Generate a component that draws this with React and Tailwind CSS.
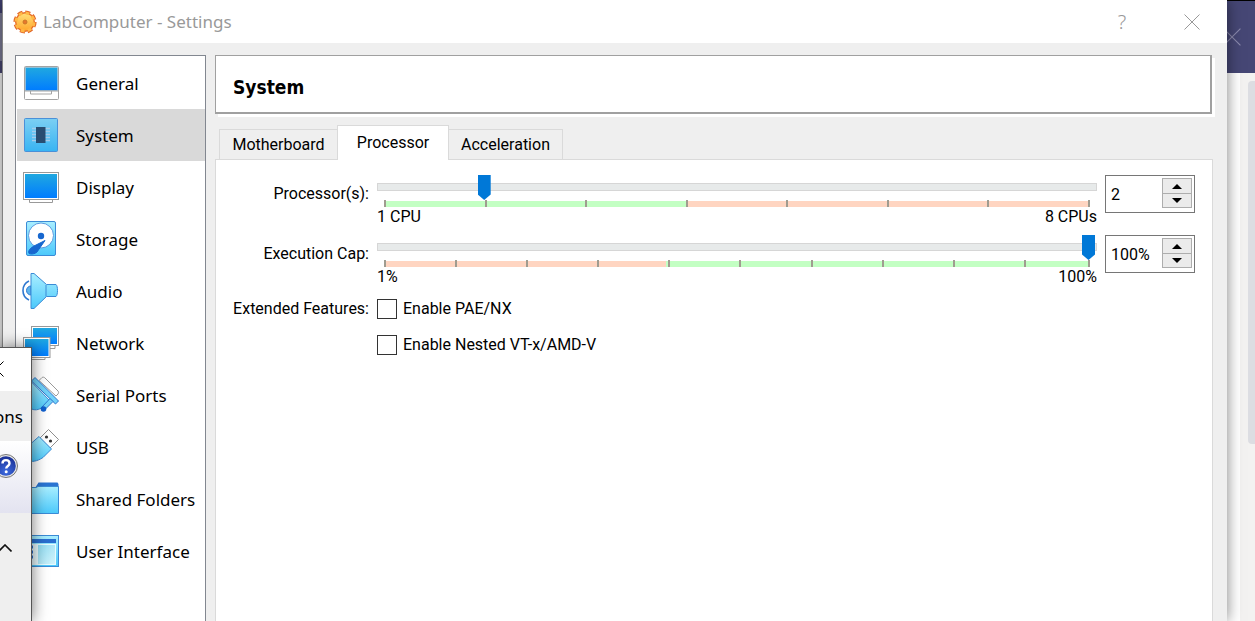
import React, { useState } from "react";
import clsx from "clsx";

function Gradients() {
  return (
    <svg width="0" height="0" className="absolute" aria-hidden="true">
      <defs>
        <linearGradient id="screen" x1="0" y1="0" x2="0" y2="1">
          <stop offset="0" stopColor="#20a8e0" />
          <stop offset="1" stopColor="#007cff" />
        </linearGradient>
        <linearGradient id="sky" x1="0" y1="0" x2="0" y2="1">
          <stop offset="0" stopColor="#a9eeff" />
          <stop offset="1" stopColor="#4cc9fb" />
        </linearGradient>
        <linearGradient id="chip" x1="0" y1="0" x2="0" y2="1">
          <stop offset="0" stopColor="#7ccff3" />
          <stop offset="1" stopColor="#38b4f3" />
        </linearGradient>
        <linearGradient id="pane" x1="0" y1="0" x2="1" y2="1">
          <stop offset="0" stopColor="#8fdcf2" />
          <stop offset="1" stopColor="#d2f3fb" />
        </linearGradient>
        <linearGradient id="gear" x1="0" y1="0" x2="0" y2="1">
          <stop offset="0" stopColor="#ffe07a" />
          <stop offset="1" stopColor="#ffa62b" />
        </linearGradient>
        <radialGradient id="help" cx="0.5" cy="0.8" r="0.8">
          <stop offset="0" stopColor="#3d6be0" />
          <stop offset="1" stopColor="#1a2f94" />
        </radialGradient>
      </defs>
    </svg>
  );
}

const icons = {
  General: (
    <>
      <rect x="1.5" y="1.5" width="34" height="33" rx="1" fill="#fff" stroke="#a3a3a3" />
      <rect x="2.5" y="2.5" width="32" height="23" fill="url(#screen)" stroke="#8fb6cc" strokeWidth="0.6" />
      <path d="M1.5 26H35M7.5 26v3h21v-3" fill="none" stroke="#a3a3a3" />
    </>
  ),
  System: (
    <>
      <rect x="1.5" y="1.5" width="33" height="33" rx="1" fill="url(#chip)" stroke="#4a90d8" />
      <path d="M9 11.5h18M9 14.5h18M9 17.5h18M9 20.5h18M9 23.5h18" stroke="#a5ccea" strokeWidth="1.4" />
      <rect x="13" y="10" width="9.5" height="16" fill="#284d72" />
    </>
  ),
  Display: (
    <>
      <path d="M6.5 30h23v3.5h-23z" fill="#fff" stroke="#999" />
      <rect x="0.5" y="3.5" width="35" height="27" fill="#fff" stroke="#999" />
      <rect x="2" y="5" width="32" height="24" fill="url(#screen)" />
    </>
  ),
  Storage: (
    <>
      <rect x="3.5" y="0.5" width="29" height="34" rx="1.5" fill="url(#sky)" stroke="#3b8bd6" />
      <circle cx="18" cy="14.5" r="12.5" fill="#fff" stroke="#5b9be0" />
      <circle cx="18" cy="15" r="3.2" fill="#1767cf" />
      <path d="M22 19.5 11 25c-5 3-6 5.5-5 7.5 2 1 6 .5 8-1.5z" fill="#1767cf" stroke="#1767cf" />
    </>
  ),
  Audio: (
    <>
      <path d="M6 8a10.5 10.5 0 0 0 0 19" fill="none" stroke="#2f78d0" strokeWidth="1.6" />
      <path d="M8 13a4.5 4.5 0 0 0 0 9z" fill="#5fb4ec" stroke="#2f78d0" />
      <path d="M8 .5h3L23.500 11.5H33c1 1 1.500 3 1.500 6s-.5 5-1.500 6h-9.500L11 35.500H8z" fill="url(#sky)" stroke="#3b8bd6" strokeLinejoin="round" />
      <path d="M23 12v11.500" stroke="#3b8bd6" />
    </>
  ),
  Network: (
    <>
      <path d="M22 20.500h10v3H22z" fill="#fff" stroke="#999" />
      <rect x="8.5" y="1.5" width="27" height="19" fill="#fff" stroke="#999" />
      <rect x="10" y="3" width="24" height="16" fill="url(#screen)" />
      <path d="M5 32h17v2.500H5z" fill="#fff" stroke="#999" />
      <rect x="0.5" y="12.5" width="26.5" height="20" fill="#fff" stroke="#999" />
      <rect x="2" y="14" width="23.5" height="17" fill="url(#screen)" />
    </>
  ),
  "Serial Ports": (
    <>
      <path d="M16 3.500 19 .500c1-.5 2-.5 3 .5l13 13c.8 1 .8 2 0 3l-2 2z" fill="#fff" stroke="#999" strokeLinejoin="round" />
      <path d="M8.500 5 27 24l-7 6c-4 3-9 4-13 1-4-4-5-9-4-15z" fill="url(#sky)" stroke="#3b8bd6" />
      <path d="M8.500 4 12 .500 35.500 24l-3 3z" fill="#72d2f8" stroke="#2f78d0" strokeLinejoin="round" />
      <path d="M19 30 27 21.500l3 3-8 8z" fill="#72d2f8" stroke="#2f78d0" />
      <circle cx="20.5" cy="32" r="2.8" fill="#1060cf" />
    </>
  ),
  USB: (
    <>
      <path d="M17 9 25.500.500 35.500 10.500 27 19z" fill="#fff" stroke="#8e8e8e" strokeLinejoin="round" />
      <circle cx="23.5" cy="8" r="1.600" fill="#333" />
      <circle cx="27.500" cy="12" r="1.600" fill="#333" />
      <path d="M16 7.500 28.500 20 20 28.500C14 32.500 9 33 4 32 3 24 5 17 8 14.500z" fill="url(#sky)" stroke="#3b8bd6" strokeLinejoin="round" />
    </>
  ),
  "Shared Folders": (
    <>
      <path d="M12 7 15.500 1.500h19l1 1.500v5H12z" fill="#2a74d2" />
      <path d="M.500 6.500H13l2-1h20.500v27H.500z" fill="url(#sky)" stroke="#3b8bd6" />
    </>
  ),
  "User Interface": (
    <>
      <rect x="0.5" y="2.5" width="35" height="31" fill="url(#sky)" stroke="#3b8bd6" />
      <rect x="2" y="6" width="31" height="4" fill="#2a6fd0" />
      <rect x="2" y="11" width="31" height="21" fill="#e8fafe" />
      <path d="M3 14h7M3 19h7M3 24h7" stroke="#2a6fd0" strokeWidth="3" />
      <rect x="15" y="12" width="17" height="19" fill="url(#pane)" />
    </>
  ),
};

const pages = Object.keys(icons);

const sliders = [
  {
    id: "processors",
    label: "Processor(s):",
    min: 1,
    max: 8,
    initial: 2,
    suffix: "",
    steps: [1, 1, 1, 1, 1, 1, 1],
    minText: "1 CPU",
    maxText: "8 CPUs",
    split: 43,
    colors: ["bg-[#c3ffc3]", "bg-[#ffd5c1]"],
  },
  {
    id: "execution-cap",
    label: "Execution Cap:",
    min: 1,
    max: 100,
    initial: 100,
    suffix: "%",
    steps: [10, 10, 10, 10, 10, 10, 10, 10, 10, 9],
    minText: "1%",
    maxText: "100%",
    split: 40,
    colors: ["bg-[#ffd5c1]", "bg-[#c3ffc3]"],
  },
];

function Cross({ className }) {
  return (
    <svg viewBox="0 0 16 16" className={clsx("h-4 w-4 shrink-0", className)} fill="none" stroke="currentColor">
      <path d="M.5.5l15 15M15.500.5l-15 15" />
    </svg>
  );
}

function GearIcon() {
  return (
    <svg viewBox="0 0 24 24" className="h-6 w-6">
      <circle cx="12" cy="12" r="9.8" fill="none" stroke="#e0652a" strokeWidth="3.6" strokeDasharray="4.9 2.797" />
      <circle cx="12" cy="12" r="9.3" fill="url(#gear)" stroke="#e8702a" strokeWidth="1.4" />
      <circle cx="12" cy="12" r="9" fill="none" stroke="#ffb845" strokeWidth="3" strokeDasharray="3.7 3.369" strokeDashoffset="-0.4" />
      <circle cx="12" cy="12" r="2" fill="#e8762a" stroke="#c9772a" />
    </svg>
  );
}

function SpinBox({ slider, value, onChange }) {
  const step = (d) => onChange(Math.min(slider.max, Math.max(slider.min, value + d)));
  const button = "flex w-full items-center justify-center border border-[#adadad] bg-[#ebebeb]";
  return (
    <div className="flex h-[38px] border border-[#767676] bg-white">
      <input
        type="text"
        aria-label={slider.label}
        value={value + slider.suffix}
        onChange={(e) => onChange(parseInt(e.target.value, 10) || slider.min)}
        className="w-0 min-w-0 flex-1 pl-[5px] pt-0.5 outline-none"
      />
      <div className="mr-0.5 mt-0.5 w-[30px]">
        <button type="button" aria-label="Increase" onClick={() => step(1)} className={clsx(button, "h-4")}>
          <svg viewBox="0 0 10 5" className="h-[5px] w-2.5"><path d="M5 0l5 5H0z" /></svg>
        </button>
        <button type="button" aria-label="Decrease" onClick={() => step(-1)} className={clsx(button, "h-[14px] border-t-0")}>
          <svg viewBox="0 0 10 5" className="h-[5px] w-2.5"><path d="M0 0h10L5 5z" /></svg>
        </button>
      </div>
    </div>
  );
}

function SliderRow({ slider }) {
  const [value, setValue] = useState(slider.initial);
  return (
    <>
      <label htmlFor={slider.id} className="h-[38px] text-right leading-[38px]">{slider.label}</label>
      <div>
        <div className="grid">
          <div className="col-start-1 row-start-1 mt-2 h-2 border border-[#d6d6d6] bg-[#e7eaea]" />
          <input
            id={slider.id}
            type="range"
            min={slider.min}
            max={slider.max}
            value={value}
            onChange={(e) => setValue(Number(e.target.value))}
            className="col-start-1 row-start-1 mr-0.5 h-[25px] appearance-none bg-transparent [&::-webkit-slider-thumb]:h-[25px] [&::-webkit-slider-thumb]:w-[13px] [&::-webkit-slider-thumb]:appearance-none [&::-webkit-slider-thumb]:bg-[#0078d7] [&::-webkit-slider-thumb]:[clip-path:polygon(0_0,100%_0,100%_78%,50%_100%,0_78%)]"
          />
        </div>
        <div className="mx-[7px] grid h-[7px]">
          <div className="col-start-1 row-start-1 mt-px flex">
            <div className={slider.colors[0]} style={{ width: `${slider.split}%` }} />
            <div className={clsx("flex-1", slider.colors[1])} />
          </div>
          <div className="col-start-1 row-start-1 flex">
            {slider.steps.map((n, i) => (
              <div key={i} className="basis-0 border-l-2 border-[#a09c90]" style={{ flexGrow: n }} />
            ))}
            <div className="w-0.5 bg-[#a09c90]" />
          </div>
        </div>
        <div className="flex justify-between leading-5">
          <span>{slider.minText}</span>
          <span>{slider.maxText}</span>
        </div>
      </div>
      <SpinBox slider={slider} value={value} onChange={setValue} />
    </>
  );
}

function Sidebar() {
  const [page, setPage] = useState("System");
  return (
    <nav className="w-[191px] shrink-0 border border-b-0 border-[#828790] bg-white pl-px pt-px font-['Noto_Sans',sans-serif] text-[17px]">
      {pages.map((name) => (
        <button
          key={name}
          type="button"
          onClick={() => setPage(name)}
          className={clsx("flex h-[52px] w-full items-center gap-[17px] whitespace-nowrap pl-1.5 text-left", page === name && "bg-[#d9d9d9]")}
        >
          <svg viewBox="0 0 36 36" className="h-9 w-9 shrink-0 overflow-visible">{icons[name]}</svg>
          <span className="pt-0.5">{name}</span>
        </button>
      ))}
    </nav>
  );
}

function Tabs() {
  const tab = "border border-b-0 border-[#dadada]";
  return (
    <div role="tablist" className="flex items-end pl-1">
      <button type="button" role="tab" className={clsx(tab, "h-[30px] w-[118px] border-r-0")}>Motherboard</button>
      <button type="button" role="tab" aria-selected="true" className={clsx(tab, "relative -mb-px h-[35px] w-28 bg-white")}>Processor</button>
      <button type="button" role="tab" className={clsx(tab, "h-[30px] w-[114px] border-l-0")}>Acceleration</button>
    </div>
  );
}

function SettingsDialog() {
  return (
    <main className="relative flex min-w-0 flex-1 flex-col bg-[#efefef] shadow-[0_0_14px_rgba(0,0,0,0.5)]">
      <header className="flex h-[43px] items-center bg-white pl-2.5 text-[#999]">
        <GearIcon />
        <h1 className="ml-1.5 flex-1 font-['Noto_Sans',sans-serif] text-[17px]">LabComputer - Settings</h1>
        <button type="button" aria-label="Help" className="h-full w-[70px] font-['Noto_Sans',sans-serif] text-xl font-light">?</button>
        <button type="button" aria-label="Close" className="flex h-full w-[70px] items-center justify-center"><Cross /></button>
      </header>
      <div className="flex flex-1 gap-[9px] pl-3 pr-3.5 pt-3">
        <Sidebar />
        <section className="flex min-w-0 flex-1 flex-col font-[Roboto,sans-serif] text-base">
          <div className="mr-px flex h-[59px] items-center border border-b-2 border-r-2 border-[#a0a0a0] bg-white pl-[17px] pt-1.5 shadow-[3px_3px_0_#fff]">
            <h2 className="font-['DejaVu_Sans_Condensed','DejaVu_Sans',sans-serif] text-[19px] font-bold">System</h2>
          </div>
          <div className="mt-[11px] flex flex-1 flex-col">
            <Tabs />
            <form className="grid flex-1 grid-cols-[137px_1fr_90px] content-start gap-x-2 gap-y-2 whitespace-nowrap border border-b-0 border-[#dadada] bg-white pl-4 pr-[17px] pt-[15px]">
              {sliders.map((s) => <SliderRow key={s.id} slider={s} />)}
              <span className="mt-1 text-right leading-5">Extended Features:</span>
              <div className="mt-1 flex flex-col gap-4">
                {["Enable PAE/NX", "Enable Nested VT-x/AMD-V"].map((text) => (
                  <label key={text} className="flex h-5 items-center gap-1.5">
                    <input type="checkbox" className="h-5 w-5 appearance-none border border-[#333] bg-white checked:bg-[#0078d7]" />
                    {text}
                  </label>
                ))}
              </div>
            </form>
          </div>
        </section>
      </div>
    </main>
  );
}

// corner of the window that sits on top of the dialog
function FrontWindow() {
  return (
    <aside className="absolute bottom-0 left-0 top-[347px] flex w-8 flex-col border-r border-t border-[#555] bg-[#efefef] shadow-[0_0_16px_rgba(0,0,0,0.55)]">
      <div className="flex h-[43px] items-center overflow-hidden bg-white pb-0.5">
        <Cross className="-ml-3" />
      </div>
      <div className="flex h-[50px] items-center justify-end overflow-hidden pr-2 pt-0.5 font-['Noto_Sans',sans-serif] text-[17px]">ons</div>
      <div className="flex h-[72px] items-start overflow-hidden bg-linear-to-b from-white to-[#e3e3f0] pt-[13px]">
        <svg viewBox="0 0 24 24" className="-ml-1.5 h-6 w-6 shrink-0">
          <circle cx="12" cy="12" r="11.5" fill="#e6e6e6" stroke="#777" />
          <circle cx="12" cy="12" r="9.8" fill="url(#help)" />
          <path d="M8.5 9.5c0-4.500 7-4.500 7 0 0 2.500-3.300 2.500-3.300 5" fill="none" stroke="#fff" strokeWidth="2.4" />
          <circle cx="12.2" cy="17.7" r="1.5" fill="#fff" />
        </svg>
      </div>
      <svg viewBox="0 0 14 8" className="-ml-0.5 mt-[31px] h-2 w-3.5" fill="none" stroke="#111" strokeWidth="1.6">
        <path d="M.5 7.5 7 1l6.500 6.500" />
      </svg>
    </aside>
  );
}

export default function App() {
  return (
    <div className="relative flex min-h-screen overflow-hidden bg-white text-black">
      <Gradients />
      <div className="flex w-[3px] shrink-0 flex-col border-r border-[#aaa]">
        <div className="h-[13px] bg-[#3f3f6f]" />
        <div className="h-12 bg-[#7a7a95]" />
        <div className="h-3 bg-[#464570]" />
        <div className="flex-1 bg-[#f0f0f0]" />
      </div>
      <SettingsDialog />
      <div className="flex w-7 shrink-0 flex-col">
        <div className="flex h-[73px] items-center overflow-hidden border-t border-black bg-[#464775] text-[#8b8aad]">
          <Cross className="-ml-1 h-[18px] w-[18px]" />
        </div>
        <div className="flex flex-1 justify-end">
          <div className="w-[15px] bg-[#f3f2f1] pl-2 pt-2">
            <div className="h-[363px] rounded-l bg-[#dcdde2]" />
          </div>
        </div>
      </div>
      <FrontWindow />
    </div>
  );
}
